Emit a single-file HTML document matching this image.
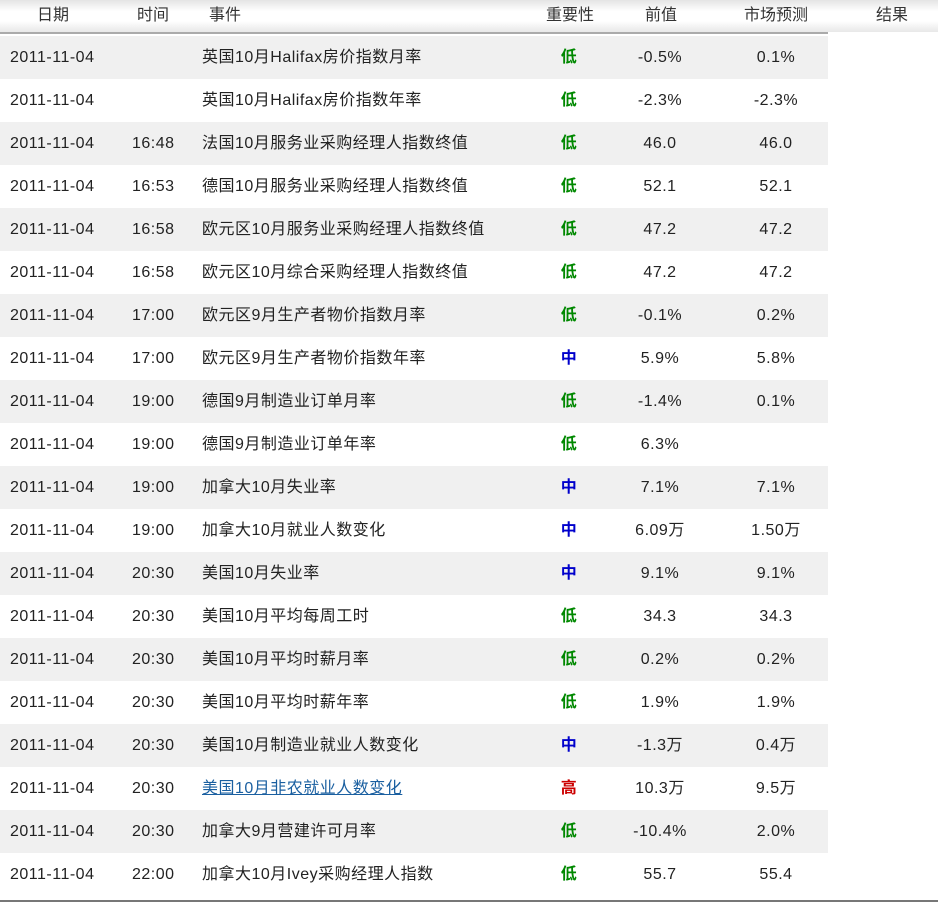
<!DOCTYPE html>
<html><head><meta charset="utf-8"><style>
body{margin:0;width:938px;height:912px;background:#fff;font-family:"Liberation Sans","Noto Sans CJK SC",sans-serif;font-size:16px;color:#222;position:relative;overflow:hidden}
.hd{position:absolute;left:0;top:0;width:938px;height:32px;background:linear-gradient(#e4e4e4,#fff 35%,#fff 65%,#e8e8e8)}
.hl{position:absolute;left:0;top:32px;width:828px;height:2px;background:#aaa}
.r{position:absolute;left:0;width:828px;height:43px;line-height:43px}
.s{background:#f0f0f0}
.r span,.hd span{position:absolute;white-space:nowrap}
.r span{letter-spacing:0.5px}
.hd span{line-height:32px;top:0;color:#333;font-size:16px}
.d{left:10px}.t{left:132px}.e{left:202px}
.i{left:569px;transform:translateX(-50%);font-weight:bold}
.p{left:660px;transform:translateX(-50%)}
.f{left:776px;transform:translateX(-50%)}
.L{color:#080}.M{color:#00c}.H{color:#c00}
a{color:#1a5fa0;text-decoration:underline}
.bl{position:absolute;left:0;top:900px;width:938px;height:2px;background:#777}
</style></head><body>
<div class="hd"><span style="left:37px">日期</span><span style="left:137px">时间</span><span style="left:209px">事件</span><span style="left:546px">重要性</span><span style="left:645px">前值</span><span style="left:744px">市场预测</span><span style="left:876px">结果</span></div>
<div class="hl"></div>
<div class="r s" style="top:36px"><span class="d">2011-11-04</span><span class="e">英国10月Halifax房价指数月率</span><span class="i L">低</span><span class="p">-0.5%</span><span class="f">0.1%</span></div>
<div class="r" style="top:79px"><span class="d">2011-11-04</span><span class="e">英国10月Halifax房价指数年率</span><span class="i L">低</span><span class="p">-2.3%</span><span class="f">-2.3%</span></div>
<div class="r s" style="top:122px"><span class="d">2011-11-04</span><span class="t">16:48</span><span class="e">法国10月服务业采购经理人指数终值</span><span class="i L">低</span><span class="p">46.0</span><span class="f">46.0</span></div>
<div class="r" style="top:165px"><span class="d">2011-11-04</span><span class="t">16:53</span><span class="e">德国10月服务业采购经理人指数终值</span><span class="i L">低</span><span class="p">52.1</span><span class="f">52.1</span></div>
<div class="r s" style="top:208px"><span class="d">2011-11-04</span><span class="t">16:58</span><span class="e">欧元区10月服务业采购经理人指数终值</span><span class="i L">低</span><span class="p">47.2</span><span class="f">47.2</span></div>
<div class="r" style="top:251px"><span class="d">2011-11-04</span><span class="t">16:58</span><span class="e">欧元区10月综合采购经理人指数终值</span><span class="i L">低</span><span class="p">47.2</span><span class="f">47.2</span></div>
<div class="r s" style="top:294px"><span class="d">2011-11-04</span><span class="t">17:00</span><span class="e">欧元区9月生产者物价指数月率</span><span class="i L">低</span><span class="p">-0.1%</span><span class="f">0.2%</span></div>
<div class="r" style="top:337px"><span class="d">2011-11-04</span><span class="t">17:00</span><span class="e">欧元区9月生产者物价指数年率</span><span class="i M">中</span><span class="p">5.9%</span><span class="f">5.8%</span></div>
<div class="r s" style="top:380px"><span class="d">2011-11-04</span><span class="t">19:00</span><span class="e">德国9月制造业订单月率</span><span class="i L">低</span><span class="p">-1.4%</span><span class="f">0.1%</span></div>
<div class="r" style="top:423px"><span class="d">2011-11-04</span><span class="t">19:00</span><span class="e">德国9月制造业订单年率</span><span class="i L">低</span><span class="p">6.3%</span></div>
<div class="r s" style="top:466px"><span class="d">2011-11-04</span><span class="t">19:00</span><span class="e">加拿大10月失业率</span><span class="i M">中</span><span class="p">7.1%</span><span class="f">7.1%</span></div>
<div class="r" style="top:509px"><span class="d">2011-11-04</span><span class="t">19:00</span><span class="e">加拿大10月就业人数变化</span><span class="i M">中</span><span class="p">6.09万</span><span class="f">1.50万</span></div>
<div class="r s" style="top:552px"><span class="d">2011-11-04</span><span class="t">20:30</span><span class="e">美国10月失业率</span><span class="i M">中</span><span class="p">9.1%</span><span class="f">9.1%</span></div>
<div class="r" style="top:595px"><span class="d">2011-11-04</span><span class="t">20:30</span><span class="e">美国10月平均每周工时</span><span class="i L">低</span><span class="p">34.3</span><span class="f">34.3</span></div>
<div class="r s" style="top:638px"><span class="d">2011-11-04</span><span class="t">20:30</span><span class="e">美国10月平均时薪月率</span><span class="i L">低</span><span class="p">0.2%</span><span class="f">0.2%</span></div>
<div class="r" style="top:681px"><span class="d">2011-11-04</span><span class="t">20:30</span><span class="e">美国10月平均时薪年率</span><span class="i L">低</span><span class="p">1.9%</span><span class="f">1.9%</span></div>
<div class="r s" style="top:724px"><span class="d">2011-11-04</span><span class="t">20:30</span><span class="e">美国10月制造业就业人数变化</span><span class="i M">中</span><span class="p">-1.3万</span><span class="f">0.4万</span></div>
<div class="r" style="top:767px"><span class="d">2011-11-04</span><span class="t">20:30</span><span class="e"><a>美国10月非农就业人数变化</a></span><span class="i H">高</span><span class="p">10.3万</span><span class="f">9.5万</span></div>
<div class="r s" style="top:810px"><span class="d">2011-11-04</span><span class="t">20:30</span><span class="e">加拿大9月营建许可月率</span><span class="i L">低</span><span class="p">-10.4%</span><span class="f">2.0%</span></div>
<div class="r" style="top:853px"><span class="d">2011-11-04</span><span class="t">22:00</span><span class="e">加拿大10月Ivey采购经理人指数</span><span class="i L">低</span><span class="p">55.7</span><span class="f">55.4</span></div>
<div class="bl"></div>
</body></html>
